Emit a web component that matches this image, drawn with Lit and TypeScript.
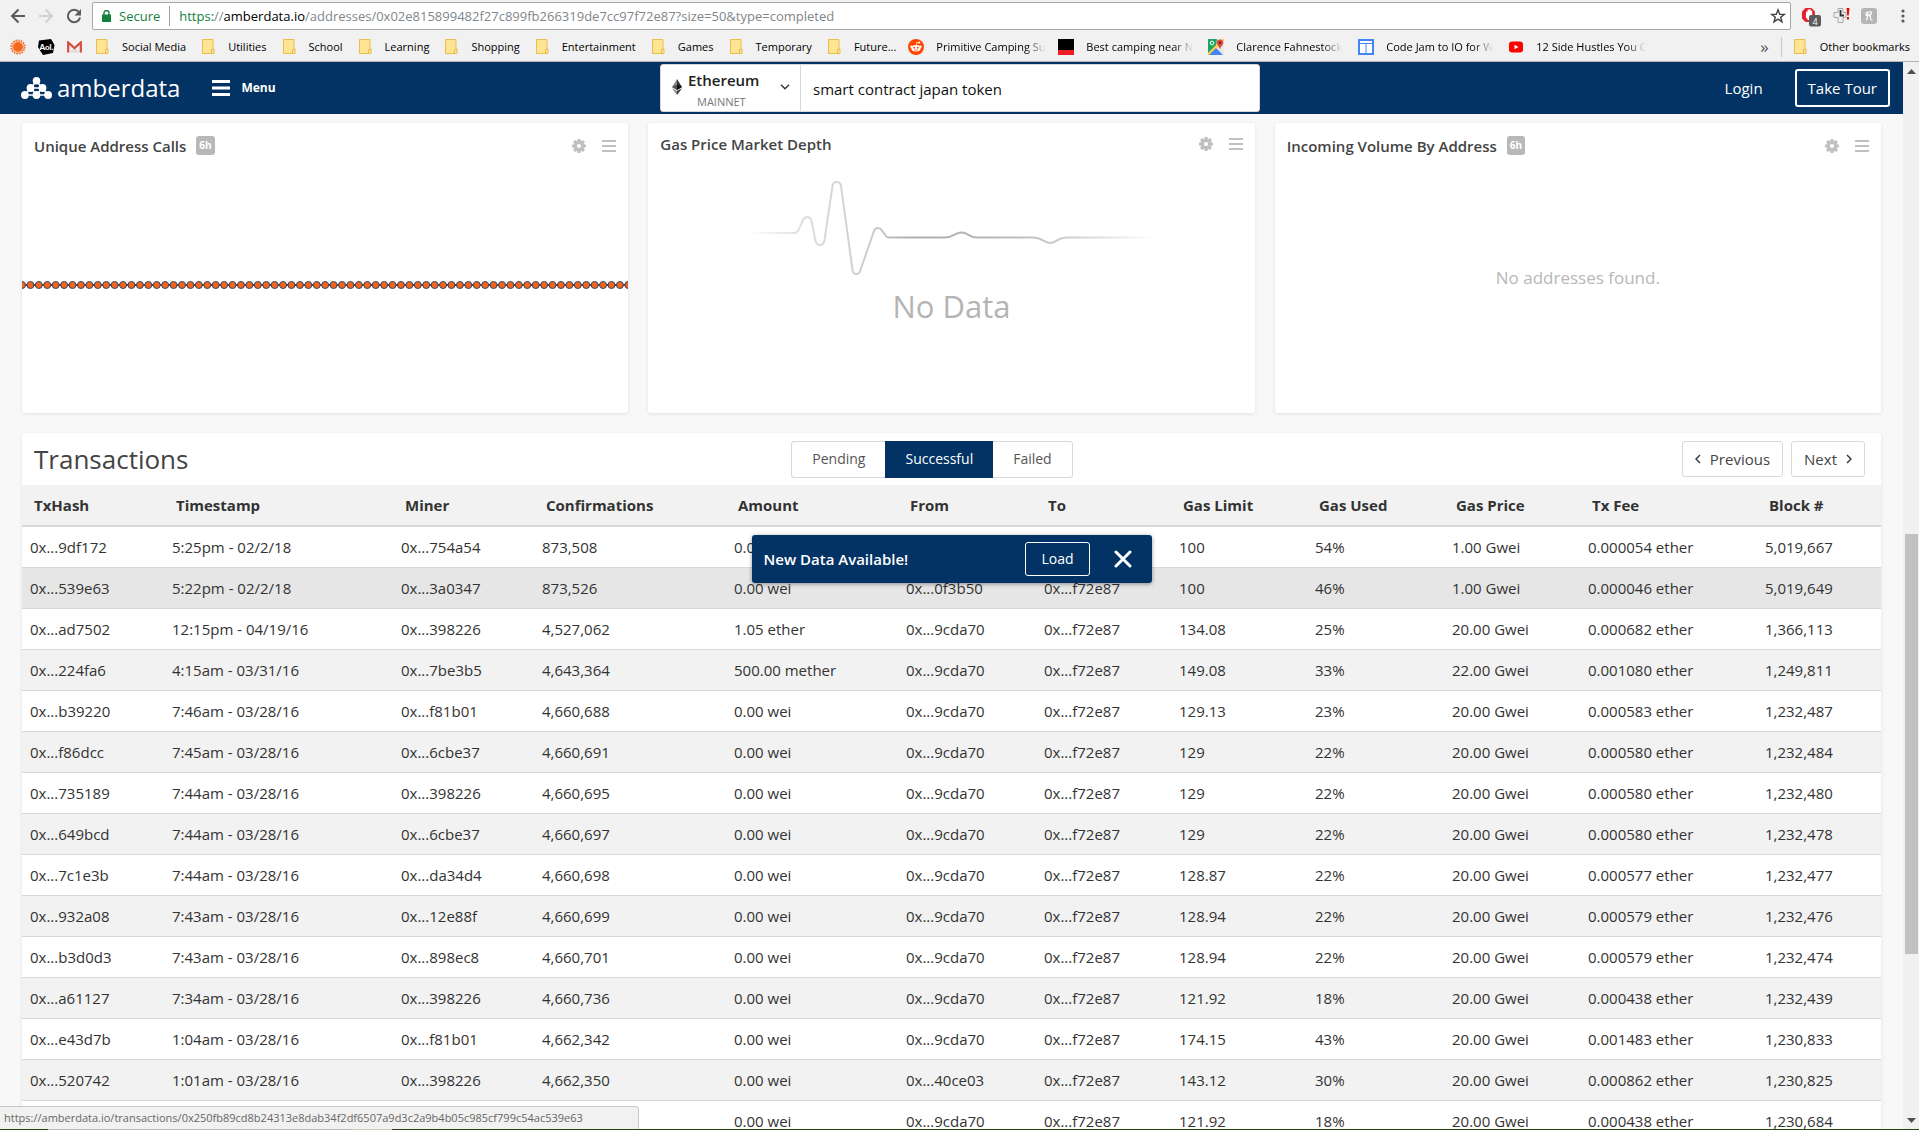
import { LitElement, html, css, svg, nothing } from "lit";
import { customElement, state } from "lit/decorators.js";
import { classMap } from "lit/directives/class-map.js";

interface Column {
  label: string;
  weight: number;
}

const COLUMNS: Column[] = [
  { label: "TxHash", weight: 142 },
  { label: "Timestamp", weight: 229 },
  { label: "Miner", weight: 141 },
  { label: "Confirmations", weight: 192 },
  { label: "Amount", weight: 172 },
  { label: "From", weight: 138 },
  { label: "To", weight: 135 },
  { label: "Gas Limit", weight: 136 },
  { label: "Gas Used", weight: 137 },
  { label: "Gas Price", weight: 136 },
  { label: "Tx Fee", weight: 177 },
  { label: "Block #", weight: 124 },
];
const TOTAL_WEIGHT = COLUMNS.reduce((sum, c) => sum + c.weight, 0);

const ROWS: string[][] = [
  ["0x...9df172", "5:25pm - 02/2/18", "0x...754a54", "873,508", "0.00 wei", "", "", "100", "54%", "1.00 Gwei", "0.000054 ether", "5,019,667"],
  ["0x...539e63", "5:22pm - 02/2/18", "0x...3a0347", "873,526", "0.00 wei", "0x...0f3b50", "0x...f72e87", "100", "46%", "1.00 Gwei", "0.000046 ether", "5,019,649"],
  ["0x...ad7502", "12:15pm - 04/19/16", "0x...398226", "4,527,062", "1.05 ether", "0x...9cda70", "0x...f72e87", "134.08", "25%", "20.00 Gwei", "0.000682 ether", "1,366,113"],
  ["0x...224fa6", "4:15am - 03/31/16", "0x...7be3b5", "4,643,364", "500.00 mether", "0x...9cda70", "0x...f72e87", "149.08", "33%", "22.00 Gwei", "0.001080 ether", "1,249,811"],
  ["0x...b39220", "7:46am - 03/28/16", "0x...f81b01", "4,660,688", "0.00 wei", "0x...9cda70", "0x...f72e87", "129.13", "23%", "20.00 Gwei", "0.000583 ether", "1,232,487"],
  ["0x...f86dcc", "7:45am - 03/28/16", "0x...6cbe37", "4,660,691", "0.00 wei", "0x...9cda70", "0x...f72e87", "129", "22%", "20.00 Gwei", "0.000580 ether", "1,232,484"],
  ["0x...735189", "7:44am - 03/28/16", "0x...398226", "4,660,695", "0.00 wei", "0x...9cda70", "0x...f72e87", "129", "22%", "20.00 Gwei", "0.000580 ether", "1,232,480"],
  ["0x...649bcd", "7:44am - 03/28/16", "0x...6cbe37", "4,660,697", "0.00 wei", "0x...9cda70", "0x...f72e87", "129", "22%", "20.00 Gwei", "0.000580 ether", "1,232,478"],
  ["0x...7c1e3b", "7:44am - 03/28/16", "0x...da34d4", "4,660,698", "0.00 wei", "0x...9cda70", "0x...f72e87", "128.87", "22%", "20.00 Gwei", "0.000577 ether", "1,232,477"],
  ["0x...932a08", "7:43am - 03/28/16", "0x...12e88f", "4,660,699", "0.00 wei", "0x...9cda70", "0x...f72e87", "128.94", "22%", "20.00 Gwei", "0.000579 ether", "1,232,476"],
  ["0x...b3d0d3", "7:43am - 03/28/16", "0x...898ec8", "4,660,701", "0.00 wei", "0x...9cda70", "0x...f72e87", "128.94", "22%", "20.00 Gwei", "0.000579 ether", "1,232,474"],
  ["0x...a61127", "7:34am - 03/28/16", "0x...398226", "4,660,736", "0.00 wei", "0x...9cda70", "0x...f72e87", "121.92", "18%", "20.00 Gwei", "0.000438 ether", "1,232,439"],
  ["0x...e43d7b", "1:04am - 03/28/16", "0x...f81b01", "4,662,342", "0.00 wei", "0x...9cda70", "0x...f72e87", "174.15", "43%", "20.00 Gwei", "0.001483 ether", "1,230,833"],
  ["0x...520742", "1:01am - 03/28/16", "0x...398226", "4,662,350", "0.00 wei", "0x...40ce03", "0x...f72e87", "143.12", "30%", "20.00 Gwei", "0.000862 ether", "1,230,825"],
  ["", "", "", "", "0.00 wei", "0x...9cda70", "0x...f72e87", "121.92", "18%", "20.00 Gwei", "0.000438 ether", "1,230,684"],
];

const FOLDERS = ["Social Media", "Utilities", "School", "Learning", "Shopping", "Entertainment", "Games", "Temporary", "Future..."];

const folderIcon = html`<svg class="folder" width="13" height="15" viewBox="0 0 13 15" aria-hidden="true">
  <path d="M.5.5h10.500v9.500h1v4.500H.5z" fill="#ffe493" stroke="#e8bf4c" />
  <path d="M9.500 14V10.500h2.500" fill="none" stroke="#e8bf4c" />
</svg>`;

const sunIcon = html`<svg width="16" height="16" viewBox="0 0 16 16" aria-hidden="true">
  <circle cx="8" cy="8" r="6.800" fill="none" stroke="#f26a21" stroke-width="1.600" stroke-dasharray="1.600 1.070" />
  <circle cx="8" cy="8" r="5.900" fill="none" stroke="#f7a06c" stroke-width="1" />
  <circle cx="8" cy="8" r="5" fill="#f26a21" />
</svg>`;

const aolIcon = html`<svg width="17" height="16" viewBox="0 0 17 16" aria-hidden="true">
  <path d="M1 1.500 13 0l3.500 6-1.500 8L5 16l-2-3-3-5z" fill="#000" />
  <text x="8.500" y="11" text-anchor="middle" font-family="Lato, sans-serif" font-size="8" font-weight="900" fill="#fff">Aol.</text>
</svg>`;

const gmailIcon = html`<svg width="15" height="12" viewBox="0 0 15 12" aria-hidden="true">
  <path d="M1 .5h13v11H1z" fill="#f4f1f0" />
  <path d="M2.500 11.500 7.500 6l5 5.500z" fill="#dedbda" />
  <path d="M1.200 11.500V1.500L7.500 7l6.300-5.500v10" fill="none" stroke="#d54b3d" stroke-width="2.200" />
</svg>`;

const redditIcon = html`<svg width="16" height="16" viewBox="0 0 16 16" aria-hidden="true">
  <circle cx="8" cy="8" r="8" fill="#ff4500" />
  <ellipse cx="8" cy="9.300" rx="4.600" ry="3.200" fill="#fff" />
  <circle cx="3.500" cy="7.800" r="1.200" fill="#fff" /><circle cx="12.500" cy="7.800" r="1.200" fill="#fff" />
  <circle cx="11.200" cy="3.600" r="1" fill="#fff" />
  <path d="m8 6.500.7-3 2.300.4" fill="none" stroke="#fff" stroke-width=".7" />
  <circle cx="6.200" cy="8.700" r=".9" fill="#ff4500" /><circle cx="9.800" cy="8.700" r=".9" fill="#ff4500" />
  <path d="M6 10.700q2 1.200 4 0" fill="none" stroke="#ff4500" stroke-width=".7" />
</svg>`;

const campIcon = html`<svg width="16" height="16" viewBox="0 0 16 16" aria-hidden="true">
  <path d="M0 0h16v11H0z" fill="#000" /><path d="M0 11h16v5H0z" fill="#ee1c24" />
</svg>`;

const mapsIcon = html`<svg width="16" height="16" viewBox="0 0 16 16" aria-hidden="true">
  <path d="M0 0h16v16H0z" fill="#e8e8e8" />
  <path d="M0 0h9l-1 7-8 8z" fill="#1fa463" />
  <path d="m0 14 14-14h2v2L2 16H0z" fill="#ffd24d" />
  <path d="m8 9 7 7H1z" fill="#4285f4" />
  <path d="M12 .500a3.300 3.300 0 0 1 3.300 3.300c0 2.500-3 3.700-3.300 7.200-.3-3.500-3.300-4.700-3.300-7.200A3.300 3.300 0 0 1 12 .500z" fill="#dc4b3e" />
  <circle cx="12" cy="3.800" r="1.200" fill="#7d1f19" />
  <circle cx="4" cy="4" r="1.800" fill="none" stroke="#fff" stroke-width="1" />
</svg>`;

const layoutIcon = html`<svg width="16" height="16" viewBox="0 0 16 16" aria-hidden="true">
  <path d="M1 1h14v14H1z" fill="#fff" stroke="#4285f4" stroke-width="2" />
  <path d="M2 4.500h12M8 5v9" fill="none" stroke="#4285f4" />
</svg>`;

const youtubeIcon = html`<svg width="16" height="16" viewBox="0 0 16 16" aria-hidden="true">
  <rect x="1" y="2.500" width="14" height="11" rx="3" fill="#f00" />
  <path d="m6.500 5.800 4 2.200-4 2.200z" fill="#fff" />
</svg>`;

const SITES = [
  { icon: redditIcon, label: "Primitive Camping Su" },
  { icon: campIcon, label: "Best camping near N" },
  { icon: mapsIcon, label: "Clarence Fahnestock" },
  { icon: layoutIcon, label: "Code Jam to IO for W" },
  { icon: youtubeIcon, label: "12 Side Hustles You C" },
];

const gearTeeth = Array.from({ length: 8 }, (_, i) => i * 45);
const gearIcon = html`<svg width="14" height="14" viewBox="0 0 14 14" aria-hidden="true">
  ${gearTeeth.map((a) => svg`<rect x="5.400" y="0" width="3.200" height="3.500" rx=".5" fill="#c0c0c0" transform="rotate(${a} 7 7)" />`)}
  <circle cx="7" cy="7" r="3.800" fill="none" stroke="#c0c0c0" stroke-width="3.400" />
</svg>`;

const listIcon = html`<svg width="14" height="12" viewBox="0 0 14 12" aria-hidden="true">
  <path d="M0 1h14M0 6h14M0 11h14" stroke="#c0c0c0" stroke-width="2" />
</svg>`;

const DOT_INTERVALS = 72;

@customElement("app-root")
export class AppRoot extends LitElement {
  @state() private tab = "Successful";
  @state() private toast = true;

  static styles = css`
    :host {
      display: flex;
      flex-direction: column;
      height: 100vh;
      position: relative;
      overflow: hidden;
      background: #f8f8f8;
      color: #333;
      font: 15px/20px "Open Sans", "Noto Sans", sans-serif;
    }
    * { box-sizing: border-box; }
    button, input, select { font: inherit; color: inherit; }
    button { background: none; border: 0; padding: 0; cursor: pointer; }
    a { color: inherit; text-decoration: none; }
    svg { display: block; flex: none; }

    .chrome { background: #f1f1f1; border-bottom: 1px solid #b4b4b4; color: #000; }
    .toolbar { display: flex; align-items: center; padding: 2px 12px 2px 10px; height: 32px; }
    .history { display: flex; gap: 12px; width: 82px; }
    .omnibox {
      flex: 1; display: flex; align-items: center; height: 28px;
      background: #fff; border: 1px solid #a8a8a8; border-radius: 2px;
      padding: 0 4px 0 9px; font-size: 13px;
    }
    .secure { color: #14803c; padding: 0 9px 0 8px; margin-right: 9px; border-right: 1px solid #a0a0a0; }
    .url { flex: 1; color: #80868b; white-space: nowrap; overflow: hidden; }
    .url .scheme { color: #14803c; }
    .url .host { color: #000; }
    .extensions { display: flex; align-items: center; gap: 11px; padding-left: 9px; }
    .extensions .more { margin-left: 7px; }

    .bookmarks { display: flex; align-items: center; height: 29px; padding: 0 9px 0 10px; font-size: 11px; }
    .shortcuts { display: flex; align-items: center; gap: 12px; padding-right: 14px; }
    .folders { display: flex; gap: 16px; padding-right: 12px; }
    .bookmark { display: flex; align-items: center; gap: 13px; white-space: nowrap; }
    .site { gap: 12px; width: 150px; padding-right: 12px; }
    .site span {
      overflow: hidden;
      mask-image: linear-gradient(90deg, #000 82%, transparent 100%);
    }
    .overflow { margin-left: auto; padding-right: 12px; color: #555; font-size: 17px; line-height: 16px; }
    .other { border-left: 1px solid #c8c8c8; padding-left: 12px; }

    .viewport { flex: 1; min-height: 0; display: flex; }
    .page { flex: 1; min-width: 0; position: relative; overflow: hidden; }
    .scrollbar {
      width: 16px; background: #f0f0f0; display: flex; flex-direction: column;
      align-items: center; padding: 7px 0 6px;
    }
    .track { flex: 1; align-self: stretch; display: grid; grid-template-rows: 460fr 420fr 164fr; padding: 0 1px 0 2px; }
    .thumb { grid-row: 2; background: #c1c1c1; }

    .nav {
      display: grid; grid-template-columns: 639fr 600px 630fr; align-items: center;
      height: 52px; padding: 0 13px 0 21px; background: #033364; color: #fff;
    }
    .nav-left { display: flex; align-items: center; gap: 32px; }
    .logo { display: flex; align-items: center; gap: 5px; font-size: 24px; line-height: 30px; }
    .menu { display: flex; align-items: center; gap: 11px; font-size: 12px; font-weight: 700; }
    .nav-right { display: flex; align-items: center; justify-content: flex-end; gap: 32px; }
    .tour { height: 38px; padding: 0 11px; border: 2px solid #fff; border-radius: 3px; }
    .search { display: flex; height: 48px; background: #fff; color: #222; border-radius: 3px; border: 1px solid #d8d8d8; }
    .network {
      width: 140px; border-right: 1px solid #d8d8d8;
      display: grid; grid-template-columns: 36px 1fr 20px; grid-template-rows: 30px 14px; align-items: center;
    }
    .network select {
      grid-area: 1 / 1 / 3 / 4; height: 46px; width: 100%; appearance: none; background: none; border: 0;
      padding: 0 24px 14px 27px; font-weight: 600; outline: 0;
    }
    .network svg { pointer-events: none; }
    .network .ether { grid-area: 1 / 1 / 2 / 2; margin-left: 11px; align-self: end; }
    .network .caret { grid-area: 1 / 3 / 3 / 4; }
    .network label { grid-area: 2 / 1 / 3 / 4; padding-left: 36px; font-size: 11px; line-height: 12px; color: #777; pointer-events: none; }
    .search input { flex: 1; min-width: 0; border: 0; background: none; padding: 2px 12px 0; outline: 0; color: #111; }

    .content { display: flex; flex-direction: column; gap: 20px; padding: 9px 22px 20px; }
    .cards { display: grid; grid-template-columns: repeat(3, 1fr); gap: 20px; }
    .card, .panel { background: #fff; border-radius: 3px; box-shadow: 0 1px 4px rgba(0, 0, 0, 0.09); }
    .card { display: flex; flex-direction: column; height: 290px; }
    .card-head { display: flex; align-items: center; padding: 11px 12px 0; gap: 10px; color: #444; }
    .card-head h2 { margin: 0; font-size: 15px; line-height: 20px; font-weight: 600; }
    .badge { background: #b8b8b8; color: #fff; font-size: 10px; line-height: 19px; font-weight: 700; padding: 0 3px; border-radius: 3px; }
    .badge-wrap { padding: 2px 0; }
    .tools { margin-left: auto; display: flex; align-items: center; gap: 16px; }
    .chart { margin-top: 122px; width: 100%; height: 12px; }
    .no-data { display: flex; flex-direction: column; align-items: center; gap: 10px; padding-top: 26px; color: #b4b4b4; font-size: 31px; line-height: 40px; }
    .empty { flex: 1; display: flex; align-items: center; justify-content: center; padding-bottom: 14px; color: #b8b8b8; font-size: 17px; }

    .panel-head { display: grid; grid-template-columns: 1fr auto 1fr; align-items: center; height: 52px; padding: 0 16px 0 12px; }
    .panel-head h1 { margin: 0; font-size: 26px; line-height: 36px; font-weight: 400; color: #444; }
    .tabs { display: flex; height: 37px; margin-right: 35px; font-size: 14px; color: #555; }
    .tabs button { padding: 0 20px; border: 1px solid #d9d9d9; border-width: 1px 0; }
    .tabs button:first-child { border-left-width: 1px; border-radius: 3px 0 0 3px; }
    .tabs button:last-child { border-right-width: 1px; border-radius: 0 3px 3px 0; }
    .tabs .active { background: #033364; border-color: #033364; color: #fff; }
    .pager { display: flex; justify-content: flex-end; gap: 8px; color: #444; }
    .pager button { display: flex; align-items: center; gap: 9px; height: 36px; padding: 0 12px; border: 1px solid #d9d9d9; border-radius: 3px; }

    table { width: 100%; border-collapse: collapse; table-layout: fixed; }
    th { height: 41px; padding: 0 12px; text-align: left; font-weight: 700; background: #f2f2f2; border-bottom: 2px solid #d9d9d9; white-space: nowrap; }
    td { height: 41px; padding: 0 8px; border-bottom: 1px solid #d9d9d9; white-space: nowrap; }
    tbody tr:nth-child(even) { background: #f2f2f2; }
    tbody tr.hovered { background: #e6e6e6; }

    .toast {
      position: absolute; top: 473px; left: 50%; width: 400px; margin-left: -200px; height: 48px;
      display: flex; align-items: center; padding: 0 20px 0 12px;
      background: #033364; color: #fff; border-radius: 3px; box-shadow: 0 1px 4px rgba(0, 0, 0, 0.4);
      font-size: 14px;
    }
    .toast strong { flex: 1; font-size: 15px; font-weight: 600; }
    .toast .load { height: 34px; padding: 0 15px; margin-right: 24px; border: 1px solid #fff; border-radius: 3px; }

    .status {
      position: absolute; left: 0; bottom: 1px; height: 23px; width: 639px; padding: 0 4px;
      border: 1px solid #c8c8c8; border-width: 1px 1px 0 0; border-top-right-radius: 4px;
      background: #f1f1f1; color: #666; font-size: 11px; line-height: 22px; white-space: nowrap;
    }
    .edge { height: 1px; background: linear-gradient(90deg, #2a4410 48px, #b9b9b9 48px 352px, #d0ceb8 352px 392px, #2a4410 392px); }
  `;

  private renderChrome() {
    return html`<header class="chrome">
      <div class="toolbar">
        <div class="history">
          <button aria-label="Back"><svg width="16" height="16" viewBox="0 0 16 16"><path d="M8.500 1.500 2 8l6.500 6.500M2 8h13" fill="none" stroke="#5a5a5a" stroke-width="2" /></svg></button>
          <button aria-label="Forward"><svg width="16" height="16" viewBox="0 0 16 16"><path d="M7.500 1.500 14 8l-6.500 6.500M14 8H1" fill="none" stroke="#d0d0d0" stroke-width="2" /></svg></button>
          <button aria-label="Reload"><svg width="16" height="16" viewBox="0 0 16 16"><path d="M13 4.200A6.200 6.200 0 1 0 14.100 9.500" fill="none" stroke="#5a5a5a" stroke-width="2" /><path d="M15 1v6.500H8.500z" fill="#5a5a5a" /></svg></button>
        </div>
        <div class="omnibox">
          <svg width="9" height="12" viewBox="0 0 9 12" aria-hidden="true"><path d="M0 4.500h9V12H0z" fill="#14803c" /><path d="M2 5V3a2.500 2.500 0 0 1 5 0v2" fill="none" stroke="#14803c" stroke-width="1.400" /></svg>
          <span class="secure">Secure</span>
          <div class="url" role="textbox" aria-label="Address"><span class="scheme">https:</span>//<span class="host">amberdata.io</span>/addresses/0x02e815899482f27c899fb266319de7cc97f72e87?size=50&amp;type=completed</div>
          <button aria-label="Bookmark"><svg width="16" height="16" viewBox="0 0 16 16"><path d="m8 1.800 1.700 4.400 4.700.2-3.700 2.900 1.300 4.500L8 11.200l-4 2.600 1.300-4.500L1.600 6.400l4.700-.2z" fill="none" stroke="#444" stroke-width="1.400" /></svg></button>
        </div>
        <div class="extensions">
          <button aria-label="Blocker">
            <svg width="22" height="22" viewBox="0 0 22 22">
              <path d="M5.500 3h6l3.500 3.500v7L11.500 17h-6L2 13.500v-7z" fill="#e3262e" />
              <path d="M6 12.500V7q.8-1.200 1.500 0V5q.8-1.200 1.600 0v-.5q.8-1.200 1.600 0V6q.8-1 1.500 0v6l-1.700 3H8z" fill="#fff" />
              <rect x="9" y="10" width="12" height="11.500" rx="2" fill="#5c5c5c" />
              <text x="15" y="19.500" text-anchor="middle" font-family="Open Sans, sans-serif" font-size="9" fill="#fff">4</text>
            </svg>
          </button>
          <button aria-label="Alerts">
            <svg width="17" height="16" viewBox="0 0 17 16">
              <path d="M5 .500h5v4h3v5h-3v5H5v-5H1v-5h4z" fill="#efefef" stroke="#a9a9a9" />
              <path d="M7.500 2v5.500H11" fill="none" stroke="#333" stroke-width="1.800" />
              <path d="M13.500 0h3l-.7 7.500h-1.600zM14 9h2v2.500h-2z" fill="#e01010" />
            </svg>
          </button>
          <button aria-label="Coupons">
            <svg width="16" height="16" viewBox="0 0 16 16">
              <rect width="16" height="16" rx="3" fill="#b5b5b5" />
              <path d="M5.500 12.500q1.500-4 1.500-8.500-2 0-2 2.500 0 1.500 2 1 3.500-.5 3.500-2.500T8 4M7.500 7.500q2.500 0 2 2.500t2 1.500" fill="none" stroke="#fff" stroke-width="1.200" />
            </svg>
          </button>
          <button class="more" aria-label="Browser menu"><svg width="12" height="16" viewBox="0 0 12 16"><g fill="#5a5a5a"><circle cx="8" cy="3" r="1.600" /><circle cx="8" cy="8" r="1.600" /><circle cx="8" cy="13" r="1.600" /></g></svg></button>
        </div>
      </div>
      <nav class="bookmarks" aria-label="Bookmarks">
        <div class="shortcuts">
          <a href="#" aria-label="Amberdata">${sunIcon}</a><a href="#" aria-label="Aol">${aolIcon}</a><a href="#" aria-label="Gmail">${gmailIcon}</a>
        </div>
        <div class="folders">${FOLDERS.map((f) => html`<a class="bookmark" href="#">${folderIcon}<span>${f}</span></a>`)}</div>
        ${SITES.map((s) => html`<a class="bookmark site" href="#">${s.icon}<span>${s.label}</span></a>`)}
        <button class="overflow" aria-label="More bookmarks">»</button>
        <a class="bookmark other" href="#">${folderIcon}<span>Other bookmarks</span></a>
      </nav>
    </header>`;
  }

  private renderNav() {
    return html`<header class="nav">
      <div class="nav-left">
        <a class="logo" href="#">
          <svg width="31" height="22" viewBox="0 0 31 22" aria-hidden="true">
            <path d="M15.500 4 4 18M15.500 4 27 18M10 11h11M4 18h23M10 11l5.500 7 5.500-7" stroke="#fff" stroke-width="1.600" fill="none" />
            <g fill="#fff"><circle cx="15.500" cy="3.800" r="3.800" /><circle cx="9.500" cy="11" r="3.900" /><circle cx="21.500" cy="11" r="3.900" /><circle cx="3.900" cy="18" r="3.900" /><circle cx="15.500" cy="18" r="3.900" /><circle cx="27.100" cy="18" r="3.900" /></g>
          </svg>
          <span>amberdata</span>
        </a>
        <button class="menu"><svg width="18" height="16" viewBox="0 0 18 16" aria-hidden="true"><path d="M0 1.500h18M0 8h18M0 14.500h18" stroke="#fff" stroke-width="3" /></svg>Menu</button>
      </div>
      <div class="search">
        <div class="network">
          <select id="network"><option>Ethereum</option></select>
          <svg class="ether" width="10" height="16" viewBox="0 0 10 16" aria-hidden="true">
            <path d="M5 0v11L0 8z" fill="#8a8a8a" /><path d="M5 0v11l5-3z" fill="#333" /><path d="M5 5.600V11L0 8z" fill="#555" /><path d="M5 5.600V11l5-3z" fill="#111" />
            <path d="M0 9.200 5 12v4z" fill="#8a8a8a" /><path d="M10 9.200 5 12v4z" fill="#333" />
          </svg>
          <label for="network">MAINNET</label>
          <svg class="caret" width="10" height="6" viewBox="0 0 10 6" aria-hidden="true"><path d="m1 .8 4 4 4-4" fill="none" stroke="#333" stroke-width="1.400" /></svg>
        </div>
        <input type="text" aria-label="Search" value="smart contract japan token" />
      </div>
      <div class="nav-right"><a href="#">Login</a><button class="tour">Take Tour</button></div>
    </header>`;
  }

  private renderCardHead(title: string, badge = "") {
    return html`<div class="card-head">
      <h2>${title}</h2>
      ${badge ? html`<div class="badge-wrap"><div class="badge">${badge}</div></div>` : nothing}
      <div class="tools"><button aria-label="Settings">${gearIcon}</button><button aria-label="Options">${listIcon}</button></div>
    </div>`;
  }

  private renderCards() {
    return html`<div class="cards">
      <section class="card">
        ${this.renderCardHead("Unique Address Calls", "6h")}
        <svg class="chart" aria-hidden="true">
          <line x1="0" x2="100%" y1="6" y2="6" stroke="#2d4a68" stroke-width="2" />
          ${Array.from({ length: DOT_INTERVALS + 1 }, (_, i) => svg`<circle cx="${(i * 100) / DOT_INTERVALS}%" cy="6" r="3.500" fill="#f7631b" stroke="#2d4a68" />`)}
        </svg>
      </section>
      <section class="card">
        ${this.renderCardHead("Gas Price Market Depth")}
        <div class="no-data">
          <svg width="408" height="96" viewBox="0 0 408 96" aria-hidden="true">
            <defs><linearGradient id="pulse" gradientUnits="userSpaceOnUse" x1="0" x2="408" y1="0" y2="0">
              <stop offset="0" stop-color="#fff" /><stop offset=".14" stop-color="#dedede" /><stop offset=".3" stop-color="#cdcdcd" />
              <stop offset=".4" stop-color="#b0b0b0" /><stop offset=".58" stop-color="#b4b4b4" /><stop offset=".8" stop-color="#d0d0d0" /><stop offset="1" stop-color="#fff" />
            </linearGradient></defs>
            <path d="M0 53H47Q50 53 51.500 50L56.500 39Q58 37 60.500 37Q63.500 37 64.500 41L68.500 61Q69.500 65 73 65Q76.500 65 77.500 60L85.500 6Q86 2 89.500 2Q93.500 2 94 6L105.500 90Q106 94 109.500 94Q112.500 94 113.500 90L127 51Q128 48 131 48Q133.500 48 134.500 50L139 56Q140 57.500 142 57.500H198C206 57.500 208 52.500 214.500 52.500S222 57.500 230 57.500H286C295 57.500 298 63 303.500 63S310 57.500 320 57.500H408" fill="none" stroke="url(#pulse)" stroke-width="2" />
          </svg>
          <span>No Data</span>
        </div>
      </section>
      <section class="card">
        ${this.renderCardHead("Incoming Volume By Address", "6h")}
        <div class="empty">No addresses found.</div>
      </section>
    </div>`;
  }

  private renderTransactions() {
    return html`<section class="panel">
      <div class="panel-head">
        <h1>Transactions</h1>
        <div class="tabs">
          ${["Pending", "Successful", "Failed"].map(
            (t) => html`<button class=${classMap({ active: t === this.tab })} @click=${() => (this.tab = t)}>${t}</button>`,
          )}
        </div>
        <div class="pager">
          <button><svg width="6" height="10" viewBox="0 0 6 10" aria-hidden="true"><path d="M5 1 1 5l4 4" fill="none" stroke="#333" stroke-width="1.400" /></svg>Previous</button>
          <button>Next<svg width="6" height="10" viewBox="0 0 6 10" aria-hidden="true"><path d="m1 1 4 4-4 4" fill="none" stroke="#333" stroke-width="1.400" /></svg></button>
        </div>
      </div>
      <table>
        <colgroup>${COLUMNS.map((c) => html`<col style="width:${(c.weight / TOTAL_WEIGHT) * 100}%" />`)}</colgroup>
        <thead><tr>${COLUMNS.map((c) => html`<th scope="col">${c.label}</th>`)}</tr></thead>
        <tbody>
          ${ROWS.map((r, i) => html`<tr class=${classMap({ hovered: i === 1 })}>${r.map((v) => html`<td>${v}</td>`)}</tr>`)}
        </tbody>
      </table>
    </section>`;
  }

  render() {
    return html`
      ${this.renderChrome()}
      <div class="viewport">
        <div class="page">
          ${this.renderNav()}
          <main class="content">${this.renderCards()}${this.renderTransactions()}</main>
          ${this.toast
            ? html`<div class="toast" role="status">
                <strong>New Data Available!</strong>
                <button class="load">Load</button>
                <button aria-label="Dismiss" @click=${() => (this.toast = false)}>
                  <svg width="18" height="18" viewBox="0 0 18 18"><path d="m2 2 14 14M16 2 2 16" stroke="#fff" stroke-width="3" stroke-linecap="round" /></svg>
                </button>
              </div>`
            : nothing}
        </div>
        <div class="scrollbar" aria-hidden="true">
          <svg width="9" height="5" viewBox="0 0 9 5"><path d="M4.500 0 9 5H0z" fill="#505050" /></svg>
          <div class="track"><div class="thumb"></div></div>
          <svg width="9" height="5" viewBox="0 0 9 5"><path d="M0 0h9L4.500 5z" fill="#505050" /></svg>
        </div>
      </div>
      <div class="status">https://amberdata.io/transactions/0x250fb89cd8b24313e8dab34f2df6507a9d3c2a9b4b05c985cf799c54ac539e63</div>
      <div class="edge"></div>
    `;
  }
}
